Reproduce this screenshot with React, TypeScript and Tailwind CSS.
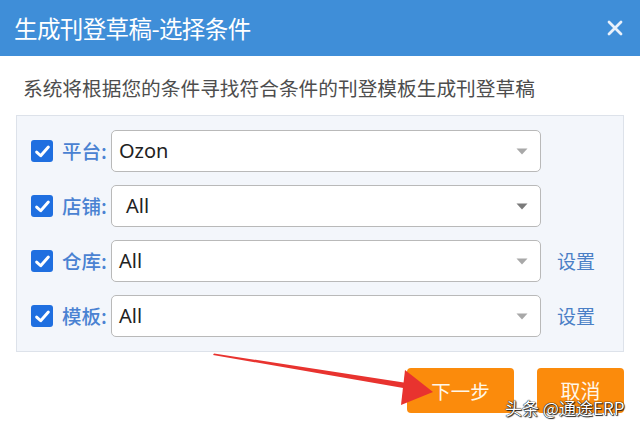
import React from "react";

const CJK = '"Noto Sans CJK SC", "Noto Sans", sans-serif';
const LATIN = '"Noto Sans", "Noto Sans CJK SC", sans-serif';

function Check() {
  return (
    <div className="w-[22px] h-[22px] rounded-[3px] bg-[#1f6fe0] flex items-center justify-center shrink-0">
      <svg width="17" height="17" viewBox="0 0 16 16">
        <path d="M2.5 8.5 L6.3 12 L13.5 3.8" fill="none" stroke="#ffffff" strokeWidth="2.8" strokeLinecap="round" strokeLinejoin="round" />
      </svg>
    </div>
  );
}

function Row({ label, value, indent, caret, setting }: { label: string; value: string; indent: string; caret: string; setting?: boolean }) {
  return (
    <div className="flex items-center h-[42px]">
      <Check />
      <div className="w-[58px] pl-[9px] text-[19.5px] font-medium text-[#4a82d2] leading-none shrink-0" style={{ fontFamily: CJK }}>
        {label}:
      </div>
      <div className="w-[430px] h-[42px] rounded-[5px] border border-[#b9b9b9] bg-white flex items-center justify-between pr-[12px] shrink-0">
        <span className={`text-[20px] text-[#222] ${indent}`} style={{ fontFamily: LATIN }}>
          {value}
        </span>
        <svg width="12" height="7" viewBox="0 0 12 7">
          <path d="M0.5 0.5 L11.5 0.5 L6 6.5 Z" fill={caret} />
        </svg>
      </div>
      {setting && (
        <span className="ml-[16px] text-[19px] text-[#4a7fc6]" style={{ fontFamily: CJK }}>
          设置
        </span>
      )}
    </div>
  );
}

export default function App() {
  return (
    <div className="w-[640px] h-[428px] bg-white relative overflow-hidden flex flex-col" style={{ fontFamily: CJK }}>
      <div className="h-[56px] bg-[#3f8ed8] flex items-center justify-between pl-[14px] pr-[17px] shrink-0">
        <span className="text-[23.5px] leading-[30px] text-white tracking-[-0.6px]">生成刊登草稿-选择条件</span>
        <svg width="16" height="16" viewBox="0 0 16 16">
          <path d="M2 2 L14 14 M14 2 L2 14" stroke="#e9f1fb" strokeWidth="2.8" strokeLinecap="round" />
        </svg>
      </div>
      <div className="pl-[23px] pt-[18px] pb-[13px] shrink-0">
        <div className="text-[19.7px] leading-[28px] text-[#4d4d4d]">
          系统将根据您的条件寻找符合条件的刊登模板生成刊登草稿
        </div>
      </div>
      <div className="mx-[16px] w-[608px] border border-[#dde2ea] bg-[#f3f6fb] pl-[14px] pt-[14px] pb-[14px] flex flex-col gap-[13px] shrink-0">
        <Row label="平台" value="Ozon" indent="pl-[7px]" caret="#a8a8a8" />
        <Row label="店铺" value="All" indent="pl-[14px]" caret="#7a7a7a" />
        <Row label="仓库" value="All" indent="pl-[7px]" caret="#a8a8a8" setting />
        <Row label="模板" value="All" indent="pl-[7px]" caret="#a8a8a8" setting />
      </div>
      <div className="flex justify-end pr-[16px] gap-[23px] mt-[16px]">
        <div className="w-[107px] h-[45px] rounded-[4px] bg-[#fb8b0c] flex items-center justify-center text-[19.5px] text-[#fff7e8]">
          下一步
        </div>
        <div className="w-[87px] h-[45px] rounded-[4px] bg-[#fb8b0c] flex items-center justify-center text-[20px] text-[#fff7e8]">
          取消
        </div>
      </div>
      <svg className="absolute left-0 top-0 pointer-events-none" width="640" height="428" viewBox="0 0 640 428">
        <polygon points="213,355 214,353.5 407,383 409,389" fill="#e8332f" />
        <polygon points="433,392 405,370 401,405" fill="#e8332f" />
      </svg>
      <div
        className="absolute left-[505px] top-[397px] text-[17px] leading-[22px] text-white whitespace-nowrap [text-shadow:0_0_1px_#000,0_0_1px_#000,1px_1px_1px_#222]"
        style={{ fontFamily: CJK }}
      >
        头条 @通途ERP
      </div>
    </div>
  );
}
